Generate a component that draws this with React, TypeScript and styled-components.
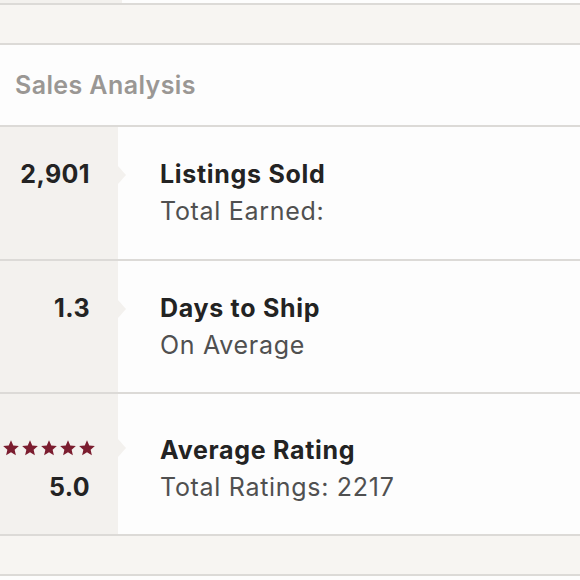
import { ReactElement } from "react";
import styled, { createGlobalStyle } from "styled-components";

const GlobalStyle = createGlobalStyle`
  html, body {
    margin: 0;
    padding: 0;
    background: #fdfdfd;
    font-family: "Inter", "Lato", sans-serif;
  }
`;

const LEFT = "#f3f1ee";
const LINE = "#dcdad7";

type Stat = {
  value: string;
  title: string;
  sub: string;
  stars?: number;
  height: number;
};

const stats: Stat[] = [
  { value: "2,901", title: "Listings Sold", sub: "Total Earned:", height: 132 },
  { value: "1.3", title: "Days to Ship", sub: "On Average", height: 131 },
  {
    value: "5.0",
    title: "Average Rating",
    sub: "Total Ratings: 2217",
    stars: 5,
    height: 140,
  },
];

const Star = () => (
  <svg width="16" height="16" viewBox="1 1.5 22 21">
    <path
      d="M12 1.5l3.1 7.1 7.7.7-5.8 5.1 1.7 7.6L12 18l-6.7 4 1.7-7.6-5.8-5.1 7.7-.7z"
      fill="#7b1d2f"
    />
  </svg>
);

export default function App(): ReactElement {
  return (
    <Page>
      <GlobalStyle />
      <TopStrip>
        <TopLeft />
      </TopStrip>
      <Band />
      <Header>Sales Analysis</Header>
      {stats.map((s) => (
        <Row key={s.title} $height={s.height}>
          <LeftCell $tall={!!s.stars}>
            <Notch $tall={!!s.stars} />
            {s.stars && (
              <Stars>
                {Array.from({ length: s.stars }).map((_, i) => (
                  <Star key={i} />
                ))}
              </Stars>
            )}
            <Value>{s.value}</Value>
          </LeftCell>
          <RightCell $tall={!!s.stars}>
            <Title>{s.title}</Title>
            <Sub>{s.sub}</Sub>
          </RightCell>
        </Row>
      ))}
      <Band />
      <Tail />
    </Page>
  );
}

const Page = styled.div`
  width: 580px;
  height: 580px;
  overflow: hidden;
  background: #fdfdfd;
`;

const TopStrip = styled.div`
  height: 3px;
  display: flex;
  background: #fdfdfd;
`;

const TopLeft = styled.div`
  width: 122px;
  background: ${LEFT};
`;

const Band = styled.div`
  height: 38px;
  background: #f7f5f2;
  border-top: 2px solid ${LINE};
`;

const Tail = styled.div`
  height: 10px;
  border-top: 2px solid ${LINE};
  background: #fdfdfd;
`;

const Header = styled.div`
  height: 82px;
  box-sizing: border-box;
  border-top: 2px solid ${LINE};
  display: flex;
  align-items: center;
  padding: 0 0 0 15px;
  font-size: 25px;
  font-weight: 600;
  letter-spacing: 0.4px;
  color: #9a9794;
  background: #fdfdfd;
`;

const Row = styled.div<{ $height: number }>`
  display: grid;
  grid-template-columns: 118px 1fr;
  border-top: 2px solid ${LINE};
  background: #fdfdfd;
  height: ${(p) => p.$height}px;
`;

const LeftCell = styled.div<{ $tall: boolean }>`
  position: relative;
  background: ${LEFT};
  text-align: right;
  padding: ${(p) => (p.$tall ? 38 : 29)}px 28px 0 0;
`;

const Notch = styled.div<{ $tall: boolean }>`
  position: absolute;
  right: -8px;
  top: ${(p) => (p.$tall ? 45 : 39)}px;
  width: 0;
  height: 0;
  border-top: 9px solid transparent;
  border-bottom: 9px solid transparent;
  border-left: 8px solid ${LEFT};
`;

const Stars = styled.div`
  display: flex;
  justify-content: flex-end;
  align-items: center;
  box-sizing: border-box;
  gap: 3px;
  height: 37px;
  padding-bottom: 6px;
  margin-right: -5px;
`;

const Value = styled.div`
  font-size: 25px;
  font-weight: 700;
  line-height: 37px;
  letter-spacing: 0.4px;
  color: #232323;
`;

const RightCell = styled.div<{ $tall: boolean }>`
  padding: ${(p) => (p.$tall ? 38 : 29)}px 0 0 42px;
`;

const Title = styled.div`
  font-size: 25px;
  font-weight: 700;
  line-height: 37px;
  letter-spacing: 0.7px;
  color: #232323;
`;

const Sub = styled.div`
  font-size: 25px;
  font-weight: 400;
  line-height: 37px;
  letter-spacing: 0.7px;
  color: #505050;
`;
